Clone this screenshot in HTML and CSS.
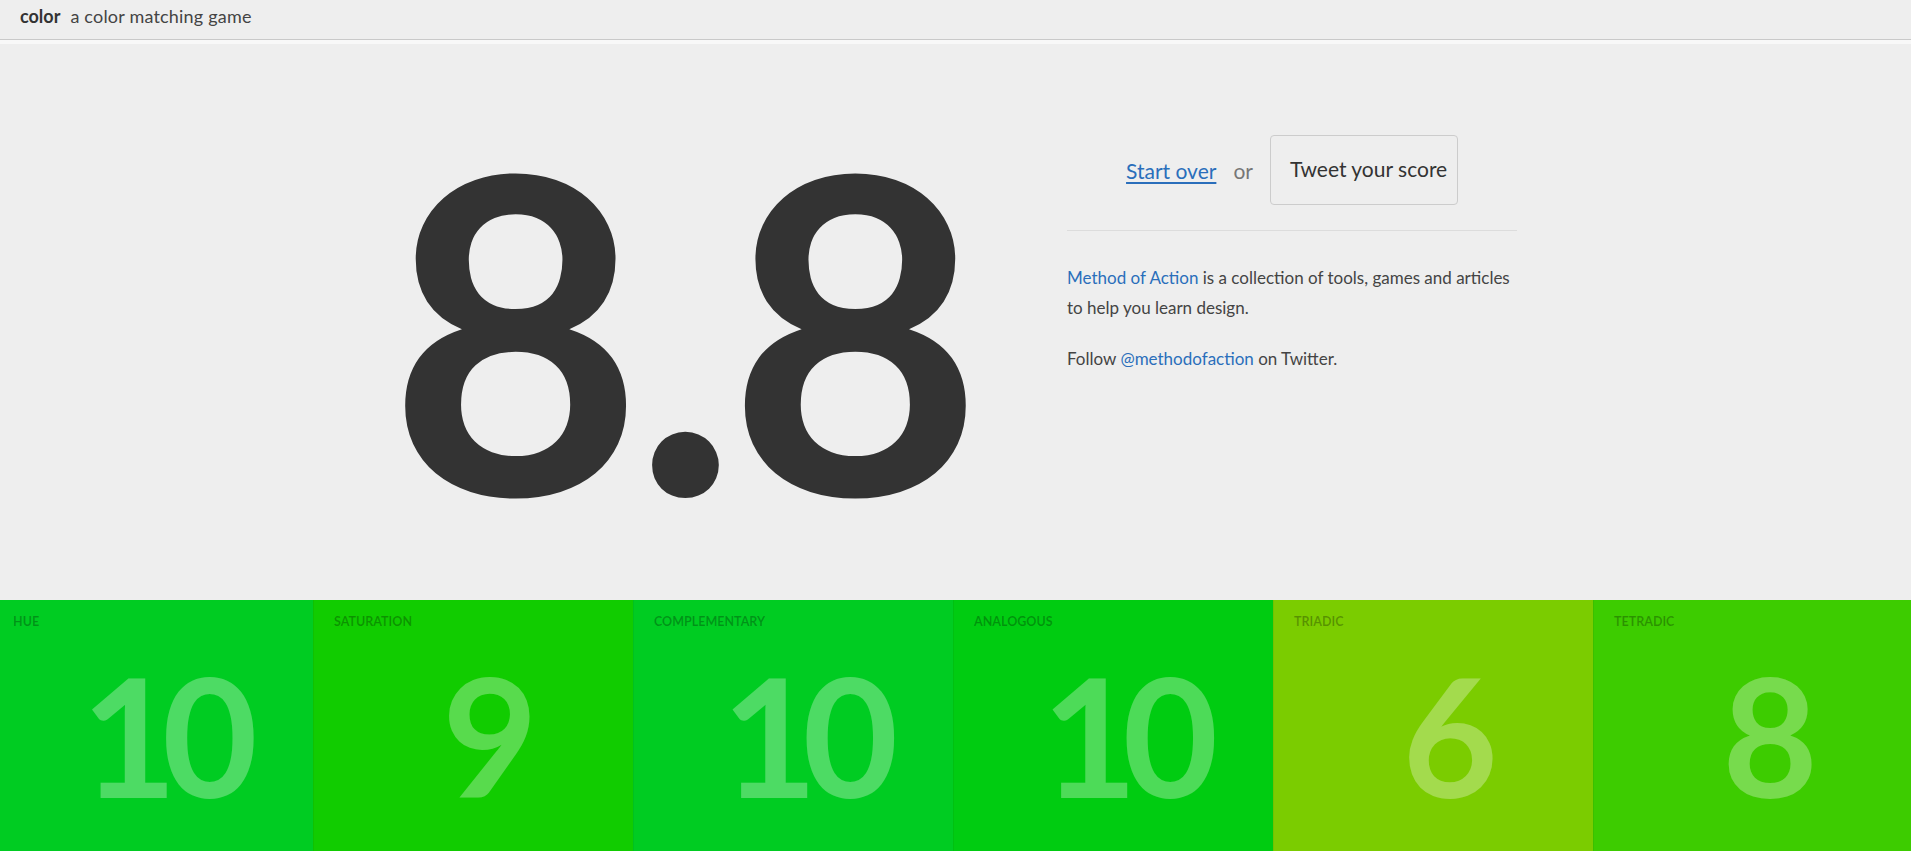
FILE: index.html
```html
<!DOCTYPE html>
<html lang="en">
<head>
<meta charset="utf-8">
<title>color — a color matching game</title>
<link rel="stylesheet" href="styles.css">
</head>
<body>
<header class="topbar">
  <span class="brand">color</span>
  <span class="tagline">a color matching game</span>
</header>
<main class="result">
  <div class="score">8.8</div>
  <aside class="panel">
    <div class="actions">
      <a class="restart" href="#">Start over</a>
      <span class="or">or</span>
      <a class="tweet" href="#">Tweet your score</a>
    </div>
    <hr class="divider">
    <p class="blurb"><a class="link" href="#">Method of Action</a> is a collection of tools, games and articles to help you learn design.</p>
    <p class="blurb follow">Follow <a class="link" href="#">@methodofaction</a> on Twitter.</p>
  </aside>
</main>
<section class="breakdown">
  <div class="tiles">
    <div class="tile tile-hue"><span class="label">Hue</span><span class="value">10</span></div>
    <div class="tile tile-saturation"><span class="label">Saturation</span><span class="value">9</span></div>
    <div class="tile tile-complementary"><span class="label">Complementary</span><span class="value">10</span></div>
    <div class="tile tile-analogous"><span class="label">Analogous</span><span class="value">10</span></div>
    <div class="tile tile-triadic"><span class="label">Triadic</span><span class="value">6</span></div>
    <div class="tile tile-tetradic"><span class="label">Tetradic</span><span class="value">8</span></div>
  </div>
</section>
</body>
</html>
```

FILE: styles.css
```css
html, body {
  margin: 0;
  padding: 0;
}

body {
  background: #eeeeee;
  color: #333333;
  font-family: "Lato", "Open Sans", "Liberation Sans", sans-serif;
  overflow: hidden;
}

.topbar {
  height: 40px;
  box-sizing: border-box;
  border-bottom: 1px solid #c9c9c9;
  padding-left: 20px;
  font-size: 18px;
  line-height: 33px;
  display: flex;
  align-items: baseline;
}

.brand {
  font-weight: 700;
  color: #333333;
}

.tagline {
  margin-left: 10px;
  color: #444444;
  letter-spacing: 0.2px;
}

.result {
  height: 560px;
  box-sizing: border-box;
  border-top: 4px solid #f8f8f8;
  display: flex;
  justify-content: center;
  padding-right: 11px;
}

.score {
  width: 684px;
  box-sizing: border-box;
  padding: 61px 0 0 5px;
  font-size: 440px;
  line-height: 1;
  font-weight: 700;
  letter-spacing: -10px;
  color: #333333;
}

.panel {
  width: 450px;
  padding-top: 91px;
}

.actions {
  display: flex;
  justify-content: center;
  align-items: center;
  gap: 17px;
  font-size: 21px;
}

.restart {
  color: #2a6ebb;
  text-decoration: underline;
  text-underline-offset: 3px;
}

.or {
  color: #777777;
}

.tweet {
  display: block;
  width: 188px;
  height: 70px;
  box-sizing: border-box;
  border: 1px solid #cccccc;
  border-radius: 4px;
  line-height: 66px;
  padding-left: 19px;
  color: #333333;
  text-decoration: none;
}

.divider {
  border: 0;
  border-top: 1px solid #dcdcdc;
  margin: 25px 0 0;
}

.blurb {
  margin: 32px 0 0;
  font-size: 17px;
  line-height: 30px;
  color: #444444;
}

.blurb.follow {
  margin-top: 21px;
}

.link {
  color: #2a6ebb;
  text-decoration: none;
}

.breakdown {
  height: 251px;
  overflow: hidden;
}

.tiles {
  display: flex;
  width: 1920px;
  margin-left: -7px;
  height: 100%;
}

.tile {
  flex: 0 0 320px;
  box-sizing: border-box;
  padding: 14px 20px 0;
  border-left: 1px solid rgba(0, 0, 0, 0.05);
}

.tile:first-child {
  border-left: 0;
}

.label {
  display: block;
  font-size: 12.5px;
  line-height: 16px;
  font-weight: 700;
  text-transform: uppercase;
  color: rgba(0, 0, 0, 0.28);
}

.value {
  display: block;
  margin-top: 22px;
  padding-left: 18px;
  text-align: center;
  font-size: 165px;
  line-height: 1;
  font-weight: 700;
  letter-spacing: -15px;
  color: rgba(255, 255, 255, 0.3);
}

.tile-hue { background: #00cc22; }
.tile-saturation { background: #11cc00; }
.tile-complementary { background: #00cc22; }
.tile-analogous { background: #00cc11; }
.tile-triadic { background: #7bcc00; }
.tile-tetradic { background: #3dcc00; }
```
